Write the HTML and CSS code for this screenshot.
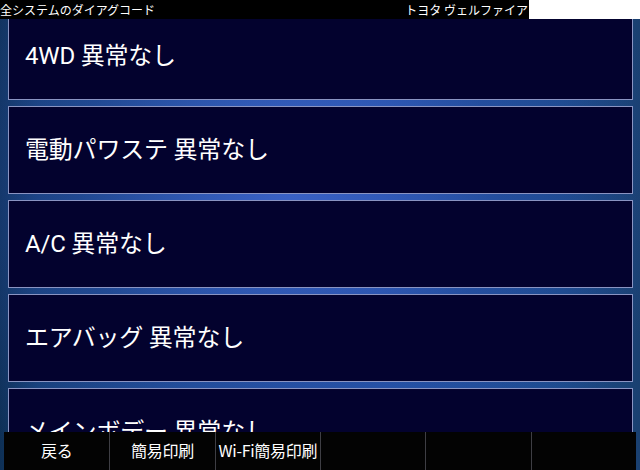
FILE: index.html
```html
<!DOCTYPE html>
<html lang="ja">
<head>
<meta charset="utf-8">
<title>全システムのダイアグコード</title>
<link rel="stylesheet" href="styles.css">
</head>
<body>
<div class="screen">
  <div class="viewport">
    <div class="list">
      <div class="card">4WD 異常なし</div>
      <div class="card">電動パワステ 異常なし</div>
      <div class="card">A/C 異常なし</div>
      <div class="card">エアバッグ 異常なし</div>
      <div class="card">メインボデー 異常なし</div>
    </div>
    <div class="header">
      <span class="title">全システムのダイアグコード</span>
      <span class="car">トヨタ ヴェルファイア</span>
      <span class="blank"></span>
    </div>
  </div>
  <div class="toolbar">
    <div class="btn">戻る</div>
    <div class="btn">簡易印刷</div>
    <div class="btn">Wi-Fi簡易印刷</div>
    <div class="btn"></div>
    <div class="btn"></div>
    <div class="btn"></div>
  </div>
</div>
</body>
</html>
```

FILE: styles.css
```css
html, body {
  margin: 0;
  padding: 0;
  background: #000;
}
.screen {
  width: 640px;
  height: 470px;
  overflow: hidden;
  font-family: Roboto, "Noto Sans CJK JP", sans-serif;
  color: #fff;
  background:
    radial-gradient(ellipse 60% 80% at 45% 40%, rgba(62,100,205,0.85) 0%, rgba(40,78,165,0.5) 55%, rgba(20,60,110,0) 100%),
    linear-gradient(90deg, #0e3056 0%, #163e74 6%, #1f4c92 30%, #2452a6 60%, #1c4a8a 88%, #1a4070 100%);
  display: flex;
  flex-direction: column;
}
.viewport {
  position: relative;
  height: 432px;
  overflow: hidden;
  flex: none;
}
.list {
  display: flex;
  flex-direction: column;
  gap: 6px;
  padding: 12px 7px 0 8px;
}
.card {
  flex: none;
  height: 86px;
  border: 1px solid #8a94c2;
  background: #03022e;
  display: flex;
  align-items: center;
  padding-left: 16px;
  font-size: 24px;
  line-height: 1;
  letter-spacing: -0.2px;
}
.header {
  position: absolute;
  top: 0;
  left: 0;
  width: 640px;
  height: 19px;
  background: #000;
  display: flex;
  align-items: center;
  font-size: 12px;
  line-height: 19px;
  font-family: "Noto Sans CJK JP", sans-serif;
}
.title {
  flex: 1;
}
.car {
  padding-right: 1px;
}
.blank {
  width: 111px;
  height: 19px;
  background: #fff;
}
.toolbar {
  margin: 0 4px;
  height: 38px;
  flex: none;
  background: #030303;
  display: grid;
  grid-template-columns: repeat(6, 1fr);
}
.btn {
  display: flex;
  align-items: center;
  justify-content: center;
  border-left: 1px solid #3e3e44;
  font-family: "Noto Sans CJK JP", sans-serif;
  font-size: 16px;
  letter-spacing: -0.3px;
  padding-bottom: 2px;
}
.btn:first-child {
  border-left: none;
}
```
